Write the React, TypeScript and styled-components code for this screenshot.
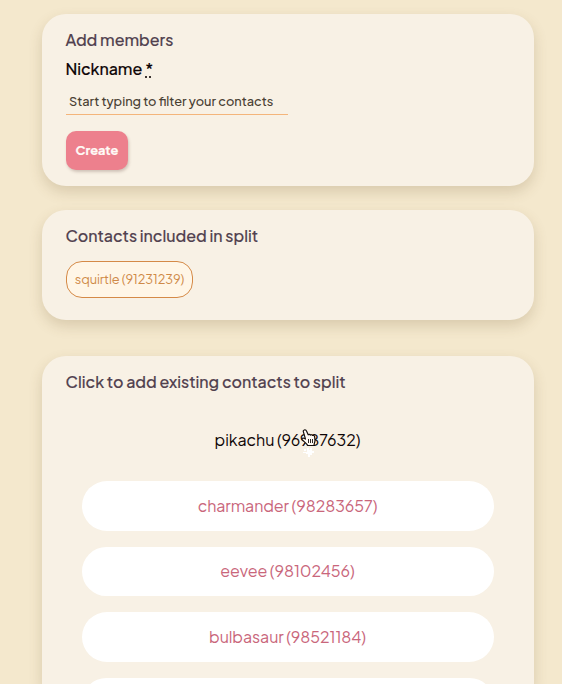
import React from "react";
import styled, { createGlobalStyle, css } from "styled-components";

const FONT = `"Plus Jakarta Sans", Inter, "Liberation Sans", sans-serif`;

const GlobalStyle = createGlobalStyle`
  *, *::before, *::after { box-sizing: border-box; }
  html, body { margin: 0; height: 100%; overflow: hidden; }
  body {
    background: #f4e8cd;
    color: #0e0505;
    font-family: ${FONT};
    font-size: 16px;
  }
`;

const Page = styled.main`
  display: flex;
  flex-direction: column;
  width: 492px;
  height: 684px;
  margin: 0 0 0 42px;
  padding-top: 14px;
`;

const Card = styled.section<{ $height?: number; $gap?: number }>`
  flex: none;
  height: ${(p) => p.$height}px;
  margin-bottom: ${(p) => p.$gap}px;
  padding: 14px 24px 0 23.5px;
  border-radius: 24px;
  background: #f8f1e5;
  box-shadow: 0 6px 14px rgba(110, 85, 45, 0.2);
  ${(p) =>
    p.$height === undefined &&
    css`
      flex: 1 1 0;
      min-height: 0;
      height: auto;
      margin-bottom: 0;
      overflow: hidden;
      border-radius: 24px 24px 0 0;
    `}
`;

const Title = styled.h2`
  margin: 0;
  color: #51414f;
  font-size: 16px;
  font-weight: 500;
  line-height: 24px;
  letter-spacing: -0.01px;
  -webkit-text-stroke: 0.15px currentColor;
`;

const Label = styled.label`
  display: flex;
  gap: 3px;
  margin-top: 5px;
  font-weight: 500;
  line-height: 24px;
  letter-spacing: -0.05px;
  -webkit-text-stroke: 0.15px currentColor;
`;

const Required = styled.abbr`
  text-decoration: underline dotted;
  text-underline-offset: 2px;
`;

const Input = styled.input`
  display: block;
  width: 222px;
  height: 28px;
  margin: 6px 0 0 0.5px;
  padding: 1px 3px 0;
  border: 0;
  border-bottom: 1px solid #f4b57b;
  outline: 0;
  background: transparent;
  font: 500 12.8px ${FONT};
  &::placeholder { color: #494033; opacity: 1; }
`;

const CreateButton = styled.button`
  display: block;
  width: 62px;
  height: 39px;
  margin: 16px 0 0 0.5px;
  padding: 0 0 1px;
  border: 0;
  border-radius: 10px;
  background: #ed808d;
  color: #fffaf6;
  box-shadow: 1px 2px 3px rgba(90, 60, 50, 0.25);
  font: 700 12.8px ${FONT};
  -webkit-text-stroke: 0.2px currentColor;
`;

const Chip = styled.button`
  display: flex;
  align-items: center;
  justify-content: center;
  width: 127px;
  height: 37px;
  margin: 13px 0 0 0.5px;
  padding: 0 0 1px;
  border: 1px solid #d58a47;
  border-radius: 16px;
  background: #fff6e7;
  color: #cf8a48;
  font: 400 12.8px ${FONT};
  letter-spacing: -0.07px;
  white-space: nowrap;
`;

const ContactList = styled.div`
  display: flex;
  flex-direction: column;
  gap: 16px;
  padding: 21.5px 16px 0 16.5px;
`;

const Contact = styled.button<{ $hovered?: boolean }>`
  display: flex;
  flex: none;
  align-items: center;
  justify-content: center;
  position: relative;
  width: 412px;
  height: 49.5px;
  padding: 0 1px 1px 0;
  border: 0;
  border-radius: 25px;
  background: #fff;
  color: #c9667b;
  font: 400 16px ${FONT};
  letter-spacing: -0.08px;
  white-space: nowrap;
  ${(p) =>
    p.$hovered &&
    css`
      background: transparent;
      color: #0e0505;
    `}
`;

const Pointer = styled.svg`
  position: absolute;
  left: 219px;
  top: 13px;
  width: 17px;
  height: 30px;
`;

const contacts = [
  { name: "pikachu (96987632)", hovered: true },
  { name: "charmander (98283657)" },
  { name: "eevee (98102456)" },
  { name: "bulbasaur (98521184)" },
  { name: "" },
];

const HAND =
  "M3.2 1c1-.5 1.900 0 2.300 1l1.700 3.800c.7-.6 1.600-.4 2.200.3.6-.6 1.600-.5 2.100.4.900-.4 1.900.2 2.100 1.200l.4 3.600c.1 1.700-.9 2.700-1 5.200H6.600C5.900 14.500 3.200 12.800 1.400 11 .5 9.900 1.500 8.600 2.900 9.200l1.600.9L2.400 2.900c-.3-.8 0-1.600.8-1.900Z";

function HandPointer() {
  return (
    <Pointer viewBox="0 0 17 30" aria-hidden="true">
      <path d="M3 20h2v2H3zM6 19h2v2h1v-2h2v3h2v2h-2v2H9v2H7v-3H5v-1H2v-1h4z" fill="#fff" />
      <path d={HAND} fill="#fffaf4" stroke="#17100d" strokeWidth="1.2" strokeLinejoin="round" />
      <path d="M7.500 10v4M9.500 10v4M11.500 10v4" stroke="#17100d" strokeWidth=".9" />
    </Pointer>
  );
}

export default function App() {
  return (
    <>
      <GlobalStyle />
      <Page>
        <Card $height={172} $gap={24}>
          <Title>Add members</Title>
          <Label>
            Nickname
            <Required title="required">*</Required>
          </Label>
          <Input placeholder="Start typing to filter your contacts" />
          <CreateButton>Create</CreateButton>
        </Card>
        <Card $height={110} $gap={36}>
          <Title>Contacts included in split</Title>
          <Chip>squirtle (91231239)</Chip>
        </Card>
        <Card>
          <Title>Click to add existing contacts to split</Title>
          <ContactList>
            {contacts.map((c, i) => (
              <Contact key={i} $hovered={c.hovered}>
                {c.name}
                {c.hovered && <HandPointer />}
              </Contact>
            ))}
          </ContactList>
        </Card>
      </Page>
    </>
  );
}
